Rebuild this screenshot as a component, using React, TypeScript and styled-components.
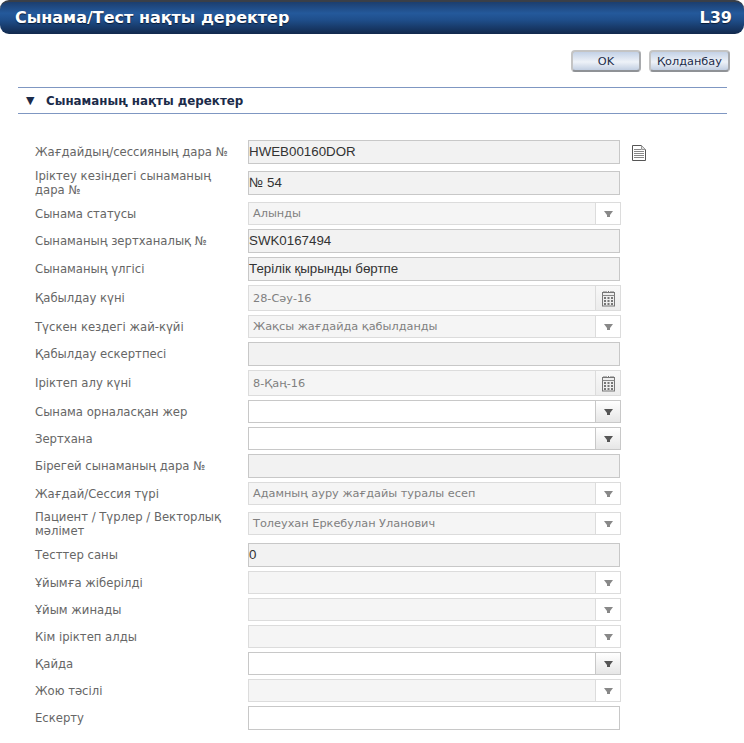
import React from "react";
import styled, { createGlobalStyle } from "styled-components";

const Global = createGlobalStyle`
  html, body { margin: 0; padding: 0; background: #fff; }
  body { font-family: "DejaVu Sans", Verdana, sans-serif; }
`;

const Page = styled.div`
  width: 744px;
  height: 743px;
  overflow: hidden;
  background: #fff;
`;

const TitleBar = styled.header`
  height: 34px;
  box-sizing: border-box;
  padding: 0 12px 1px 15px;
  display: flex;
  align-items: center;
  justify-content: space-between;
  border-radius: 9px;
  border-top: 2px solid #3a3f48;
  background: linear-gradient(#1c3e6e 0%, #24599b 35%, #1f4f8c 55%, #12294d 100%);
  color: #fff;
  font-weight: 700;
  font-size: 16px;
  text-shadow: 0 1px 1px #0b1c36;
`;

const Actions = styled.div`
  display: flex;
  justify-content: flex-end;
  gap: 8px;
  padding: 16px 14px 0 0;
`;

const ActionButton = styled.button<{ $width: number }>`
  width: ${(p) => p.$width}px;
  height: 22px;
  box-sizing: border-box;
  padding: 0;
  border: 2px solid #c4c4c4;
  border-radius: 4px;
  border-bottom-color: #8f9296;
  border-right-color: #a8aaad;
  background: linear-gradient(#c3d1e6 0%, #eef2f8 55%, #c2cfe2 100%);
  color: #1b2b49;
  font-family: "DejaVu Sans", sans-serif;
  font-size: 11.3px;
`;

const Section = styled.h2`
  margin: 15px 17px 0 18px;
  height: 27px;
  box-sizing: border-box;
  border-top: 1px solid #7f97c2;
  border-bottom: 1px solid #7f97c2;
  display: flex;
  align-items: center;
  gap: 10px;
  padding-left: 8px;
  color: #1b2b49;
  font-size: 11.85px;
  font-weight: 700;
`;

const Arrow = styled.span`
  font-size: 11px;
  width: 10px;
`;

const Form = styled.form`
  padding: 26px 0 0 35px;
`;

const Row = styled.div<{ $h: number }>`
  height: ${(p) => p.$h}px;
  display: grid;
  grid-template-columns: 213px 372px auto;
  align-items: start;
`;

const Label = styled.label<{ $h: number }>`
  height: ${(p) => p.$h}px;
  display: flex;
  align-items: center;
  color: #666;
  font-size: 11.65px;
  line-height: 14px;
  padding-right: 12px;
`;

const TextField = styled.div<{ $blank?: boolean; $h: number }>`
  width: 372px;
  height: ${(p) => p.$h}px;
  box-sizing: border-box;
  border: 1px solid #c8c8c8;
  padding-bottom: 2px;
  background: ${(p) => (p.$blank ? "#fff" : "#f2f2f2")};
  color: #333;
  font-family: "Liberation Sans", sans-serif;
  font-size: 13.33px;
  display: flex;
  align-items: center;
`;

const SelectField = styled.div<{ $active?: boolean; $h: number }>`
  width: 373px;
  height: ${(p) => p.$h}px;
  box-sizing: border-box;
  border: 1px solid ${(p) => (p.$active ? "#c8c8c8" : "#dcdcdc")};
  background: ${(p) => (p.$active ? "#fff" : "#f5f5f5")};
  display: flex;
  color: #808080;
  font-size: 11.3px;
`;

const SelectText = styled.span`
  flex: 1;
  padding-left: 4px;
  display: flex;
  align-items: center;
`;

const SelectEnd = styled.span<{ $active?: boolean; $date?: boolean }>`
  width: 24px;
  border-left: 1px solid ${(p) => (p.$active ? "#c8c8c8" : "#dcdcdc")};
  background: ${(p) =>
    p.$date ? "linear-gradient(#f8f8f8, #ececec)" : p.$active ? "linear-gradient(#fff, #e6e6e6)" : "#fff"};
  display: flex;
  align-items: center;
  justify-content: center;
`;

const DocIcon = styled.svg`
  margin: 5px 0 0 12px;
  display: block;
`;

const Caret = ({ active }: { active?: boolean }) => (
  <svg width="9" height="8" viewBox="0 0 9 8">
    <path d="M0 1h9L6 5v2H3V5z" fill={active ? "#555" : "#888"} />
  </svg>
);

const Calendar = () => (
  <svg width="13" height="17" viewBox="0 0 13 17">
    <rect x="0.5" y="2.5" width="12" height="13.5" fill="#eee" stroke="#777" />
    <path d="M2 1v2M4 1v2M6.5 1v2M9 1v2M11 1v2" stroke="#777" />
    <path d="M0.5 5.5h12" stroke="#888" />
    <path
      d="M2 7h2v2H2zM5.5 7h2v2h-2zM9 7h2v2H9zM2 10h2v2H2zM5.5 10h2v2h-2zM9 10h2v2H9zM2 13h2v2H2zM5.5 13h2v2h-2zM9 13h2v2H9z"
      fill="#777"
    />
  </svg>
);

const Doc = () => (
  <DocIcon width="14" height="16" viewBox="0 0 14 16">
    <path d="M0.5 0.5h9l4 4v11h-13z" fill="#fff" stroke="#555" />
    <path d="M9.5 0.5v4h4" fill="#ddd" stroke="#999" />
    <path d="M2 4.5h7M2 6.5h10M2 8.5h10M2 10.5h10M2 12.5h10" stroke="#888" />
  </DocIcon>
);

type Field = {
  label: string;
  kind: "text" | "select" | "date";
  value?: string;
  blank?: boolean;
  active?: boolean;
  doc?: boolean;
  step: number;
  h: number;
};

const fields: Field[] = [
  { label: "Жағдайдың/сессияның дара №", kind: "text", value: "HWEB00160DOR", doc: true, step: 31, h: 24 },
  { label: "Іріктеу кезіндегі сынаманың дара №", kind: "text", value: "№ 54", step: 31, h: 24 },
  { label: "Сынама статусы", kind: "select", value: "Алынды", step: 27, h: 23 },
  { label: "Сынаманың зертханалық №", kind: "text", value: "SWK0167494", step: 28, h: 24 },
  { label: "Сынаманың үлгісі", kind: "text", value: "Терілік қырынды бөртпе", step: 28, h: 24 },
  { label: "Қабылдау күні", kind: "date", value: "28-Сәу-16", step: 30, h: 26 },
  { label: "Түскен кездегі жай-күйі", kind: "select", value: "Жақсы жағдайда қабылданды", step: 27, h: 23 },
  { label: "Қабылдау ескертпесі", kind: "text", step: 28, h: 24 },
  { label: "Іріктеп алу күні", kind: "date", value: "8-Қаң-16", step: 30, h: 26 },
  { label: "Сынама орналасқан жер", kind: "select", active: true, step: 27, h: 23 },
  { label: "Зертхана", kind: "select", active: true, step: 27, h: 23 },
  { label: "Бірегей сынаманың дара №", kind: "text", step: 28, h: 24 },
  { label: "Жағдай/Сессия түрі", kind: "select", value: "Адамның ауру жағдайы туралы есеп", step: 30, h: 23 },
  { label: "Пациент / Түрлер / Векторлық мәлімет", kind: "select", value: "Толеухан Еркебулан Уланович", step: 31, h: 23 },
  { label: "Тесттер саны", kind: "text", value: "0", step: 28, h: 24 },
  { label: "Ұйымға жіберілді", kind: "select", step: 27, h: 23 },
  { label: "Ұйым жинады", kind: "select", step: 27, h: 23 },
  { label: "Кім іріктеп алды", kind: "select", step: 27, h: 23 },
  { label: "Қайда", kind: "select", active: true, step: 27, h: 23 },
  { label: "Жою тәсілі", kind: "select", step: 27, h: 23 },
  { label: "Ескерту", kind: "text", blank: true, step: 27, h: 24 },
];

const Control = ({ f }: { f: Field }) => {
  if (f.kind === "text") {
    return <TextField $h={f.h} $blank={f.blank}>{f.value}</TextField>;
  }
  return (
    <SelectField $h={f.h} $active={f.active}>
      <SelectText>{f.value}</SelectText>
      <SelectEnd $active={f.active} $date={f.kind === "date"}>
        {f.kind === "date" ? <Calendar /> : <Caret active={f.active} />}
      </SelectEnd>
    </SelectField>
  );
};

export default function App() {
  return (
    <Page>
      <Global />
      <TitleBar>
        <span>Сынама/Тест нақты деректер</span>
        <span>L39</span>
      </TitleBar>
      <Actions>
        <ActionButton $width={70}>OK</ActionButton>
        <ActionButton $width={81}>Қолданбау</ActionButton>
      </Actions>
      <Section>
        <Arrow>▼</Arrow>
        Сынаманың нақты деректер
      </Section>
      <Form>
        {fields.map((f) => (
          <Row key={f.label} $h={f.step}>
            <Label $h={f.h}>{f.label}</Label>
            <Control f={f} />
            {f.doc && <Doc />}
          </Row>
        ))}
      </Form>
    </Page>
  );
}
